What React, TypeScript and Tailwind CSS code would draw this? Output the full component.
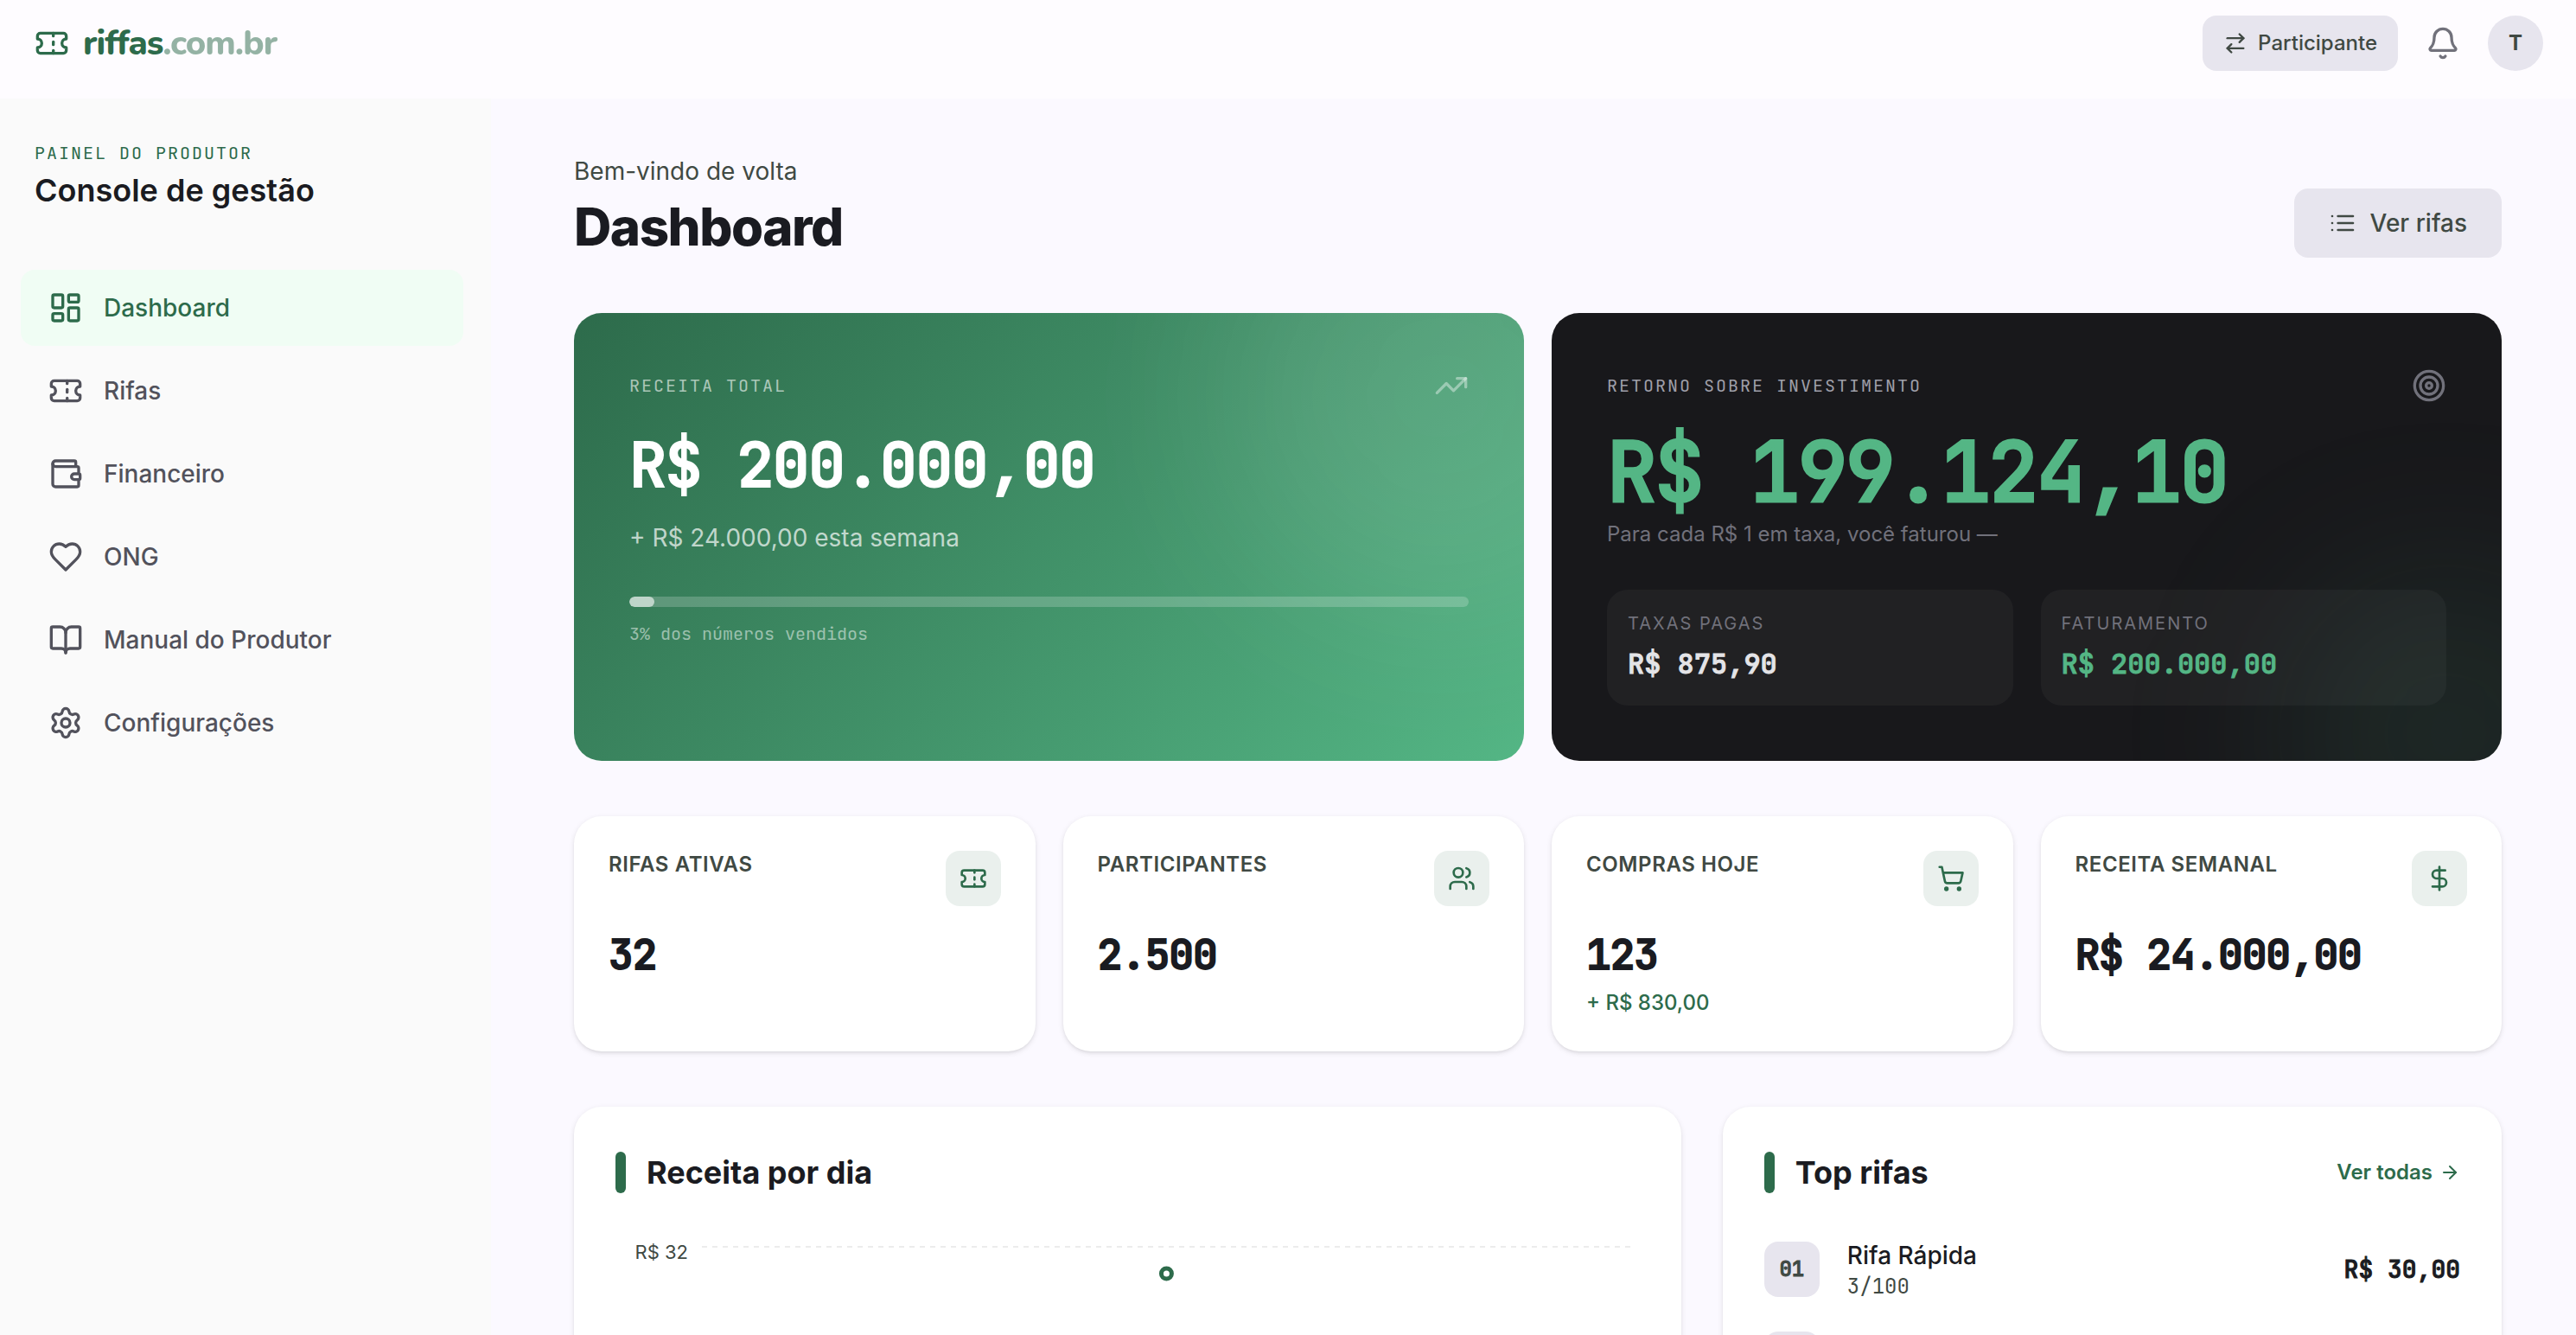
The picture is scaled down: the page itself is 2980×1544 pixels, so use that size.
import { ReactNode } from "react";
import {
  ArrowRight,
  ArrowRightLeft,
  Bell,
  BookOpen,
  DollarSign,
  LayoutDashboard,
  LucideIcon,
  Settings,
  ShoppingCart,
  Target,
  Ticket,
  TrendingUp,
  Users,
  Wallet,
} from "lucide-react";
import clsx from "clsx";

type IconProps = { className?: string };

const MONO = "font-['JetBrains_Mono','Liberation_Mono',monospace]";

function HeartIcon({ className }: IconProps) {
  return (
    <svg
      viewBox="0 0 24 24"
      fill="none"
      stroke="currentColor"
      strokeWidth={2}
      strokeLinecap="round"
      strokeLinejoin="round"
      className={className}
      aria-hidden="true"
    >
      <path d="M19 14c1.49-1.46 3-3.21 3-5.5A5.5 5.5 0 0 0 16.5 3c-1.76 0-3 .5-4.5 2-1.5-1.5-2.74-2-4.5-2A5.5 5.5 0 0 0 2 8.5c0 2.3 1.5 4.05 3 5.5l7 7Z" />
    </svg>
  );
}

function ListIcon({ className }: IconProps) {
  return (
    <svg
      viewBox="0 0 24 24"
      fill="none"
      stroke="currentColor"
      strokeWidth={2}
      strokeLinecap="round"
      strokeLinejoin="round"
      className={className}
      aria-hidden="true"
    >
      <path d="M3 6h.01M3 12h.01M3 18h.01M8 6h13M8 12h13M8 18h13" />
    </svg>
  );
}

const navItems: { label: string; icon: LucideIcon | typeof HeartIcon; active?: boolean }[] = [
  { label: "Dashboard", icon: LayoutDashboard, active: true },
  { label: "Rifas", icon: Ticket },
  { label: "Financeiro", icon: Wallet },
  { label: "ONG", icon: HeartIcon },
  { label: "Manual do Produtor", icon: BookOpen },
  { label: "Configurações", icon: Settings },
];

const stats: { label: string; value: string; note?: string; icon: LucideIcon }[] = [
  { label: "Rifas ativas", value: "32", icon: Ticket },
  { label: "Participantes", value: "2.500", icon: Users },
  { label: "Compras hoje", value: "123", note: "+ R$ 830,00", icon: ShoppingCart },
  { label: "Receita semanal", value: "R$ 24.000,00", icon: DollarSign },
];

const topRaffles: { name: string; sold: string; total: string }[] = [
  { name: "Rifa Rápida", sold: "3/100", total: "R$ 30,00" },
  { name: "", sold: "", total: "" },
];

function Header() {
  return (
    <header className="flex shrink-0 items-center justify-between bg-[#fefcff] pt-[18px] pr-[38px] pb-8 pl-10">
      <a href="#" className="flex items-center gap-4 text-[#2d6b4b]">
        <Ticket className="size-10" />
        <span className="font-['Nunito','Lato',sans-serif] text-[40px] leading-[64px] font-extrabold tracking-tight">
          riffas<span className="opacity-50">.com.br</span>
        </span>
      </a>
      <div className="flex items-center gap-5">
        <button
          type="button"
          className="flex h-16 items-center gap-3 rounded-2xl bg-[#e7e5ee] px-6 text-[24px] font-medium text-[#404943]"
        >
          <ArrowRightLeft className="size-7" />
          Participante
        </button>
        <button type="button" aria-label="Notificações" className="flex size-16 items-center justify-center text-zinc-500">
          <Bell className="size-10" />
        </button>
        <button type="button" className="size-16 rounded-full bg-[#e7e5ee] text-[24px] font-bold text-[#404943]">
          T
        </button>
      </div>
    </header>
  );
}

function Sidebar() {
  return (
    <aside className="w-[568px] shrink-0 bg-[#fafafa] pt-12 pr-8 pl-6">
      <div className="px-4">
        <p className={clsx(MONO, "text-[20px] leading-[30px] tracking-widest text-[#2d6b4b] uppercase")}>
          Painel do Produtor
        </p>
        <p className="mt-1 text-[36px] leading-[48px] font-semibold text-[#1a1b21]">Console de gestão</p>
      </div>
      <nav className="mt-17 flex flex-col gap-2">
        {navItems.map(({ label, icon: Icon, active }) => (
          <a
            key={label}
            href="#"
            className={clsx(
              "flex h-22 items-center gap-6 rounded-2xl px-8 text-[28px] font-medium",
              active ? "bg-green-50 text-[#2d6b4b]" : "text-zinc-600",
            )}
          >
            <Icon className="size-10" />
            {label}
          </a>
        ))}
      </nav>
    </aside>
  );
}

function RevenueCard() {
  const soldPercent = 3;
  return (
    <section className="relative overflow-hidden rounded-4xl bg-linear-135 from-[#2d6b4b] to-[#54b685] p-16">
      <div className="absolute -top-40 -right-40 size-128 rounded-full bg-white/10 blur-[96px]" />
      <div className="relative">
        <div className="flex items-center justify-between">
          <h2 className={clsx(MONO, "text-[20px] leading-10 tracking-widest text-white/60 uppercase")}>Receita total</h2>
          <TrendingUp className="size-10 text-white/40" />
        </div>
        <p
          className={clsx(
            MONO,
            "mt-8 text-[72px] leading-[80px] font-medium tracking-tight text-white [-webkit-text-stroke:2px]",
          )}
        >
          R$ 200.000,00
        </p>
        <p className="mt-6 text-[28px] leading-10 text-white/70">+ R$ 24.000,00 esta semana</p>
        <div className="mt-12 h-3 overflow-hidden rounded-full bg-white/20">
          <div className="h-full rounded-full bg-white/60" style={{ width: `${soldPercent}%` }} />
        </div>
        <p className={clsx(MONO, "mt-4 text-[20px] leading-[30px] text-white/50")}>{soldPercent}% dos números vendidos</p>
      </div>
    </section>
  );
}

function RoiBox({ label, value, highlight }: { label: string; value: string; highlight?: boolean }) {
  return (
    <div className="rounded-3xl bg-white/4 p-6">
      <p className="text-[20px] leading-[30px] tracking-widest text-zinc-500 uppercase">{label}</p>
      <p
        className={clsx(
          MONO,
          "mt-2 text-[32px] leading-[48px] font-medium [-webkit-text-stroke:1px]",
          highlight ? "text-[#54b685]" : "text-zinc-200",
        )}
      >
        {value}
      </p>
    </div>
  );
}

function RoiCard() {
  return (
    <section className="relative overflow-hidden rounded-4xl bg-zinc-900 p-16">
      <div className="absolute -right-32 -bottom-40 size-96 rounded-full bg-[#54b685]/10 blur-[96px]" />
      <div className="relative">
        <div className="flex items-center justify-between">
          <h2 className={clsx(MONO, "text-[20px] leading-10 tracking-widest text-zinc-400 uppercase")}>
            Retorno sobre investimento
          </h2>
          <Target className="size-10 text-zinc-500" />
        </div>
        <p
          className={clsx(
            MONO,
            "mt-8 text-[96px] leading-[96px] font-medium tracking-tight text-[#54b685] [-webkit-text-stroke:3px]",
          )}
        >
          R$ 199.124,10
        </p>
        <p className="mt-2 text-[24px] leading-8 text-zinc-500">Para cada R$ 1 em taxa, você faturou —</p>
        <div className="mt-12 grid grid-cols-2 gap-8">
          <RoiBox label="Taxas pagas" value="R$ 875,90" />
          <RoiBox label="Faturamento" value="R$ 200.000,00" highlight />
        </div>
      </div>
    </section>
  );
}

function Card({ children, className }: { children: ReactNode; className?: string }) {
  return (
    <section
      className={clsx(
        "rounded-4xl bg-white shadow-[0_2px_6px_rgba(0,0,0,0.1),0_2px_4px_-2px_rgba(0,0,0,0.1)]",
        className,
      )}
    >
      {children}
    </section>
  );
}

function StatCard({ label, value, note, icon: Icon }: (typeof stats)[number]) {
  return (
    <Card className="p-10">
      <div className="flex items-start justify-between">
        <h2 className="text-[24px] leading-8 font-semibold tracking-wide text-[#404943] uppercase">{label}</h2>
        <span className="flex size-16 items-center justify-center rounded-2xl bg-[#2d6b4b]/10 text-[#2d6b4b]">
          <Icon className="size-8" />
        </span>
      </div>
      <p
        className={clsx(
          MONO,
          "mt-6 text-[48px] leading-[64px] font-medium tracking-tight text-[#1a1b21] [-webkit-text-stroke:2px]",
        )}
      >
        {value}
      </p>
      {note ? <p className="mt-2 text-[24px] leading-8 font-medium text-[#2d6b4b]">{note}</p> : null}
    </Card>
  );
}

function SectionTitle({ title, right }: { title: string; right?: ReactNode }) {
  return (
    <div className="flex items-center justify-between">
      <div className="flex items-center gap-6">
        <span className="h-12 w-3 rounded-full bg-[#2d6b4b]" />
        <h2 className="text-[36px] leading-[56px] font-bold text-[#1a1b21]">{title}</h2>
      </div>
      {right}
    </div>
  );
}

function RevenueChart() {
  return (
    <div className="mt-12 flex gap-4 pr-[10px]">
      <span className="w-[84px] shrink-0 text-right text-[22px] leading-8 text-[#404943]">R$ 32</span>
      <svg className="h-100 w-full min-w-0 flex-1" role="img" aria-label="Receita por dia">
        <line x1="0" x2="100%" y1="10" y2="10" stroke="#ececec" strokeWidth="2" strokeDasharray="6 6" />
        <circle cx="50%" cy="41" r="6" fill="#fff" stroke="#2d6b4b" strokeWidth="5" />
      </svg>
    </div>
  );
}

function TopRaffles() {
  return (
    <Card className="col-span-5 p-12">
      <SectionTitle
        title="Top rifas"
        right={
          <a href="#" className="flex items-center gap-2 text-[24px] font-semibold text-[#2d6b4b]">
            Ver todas
            <ArrowRight className="size-6" />
          </a>
        }
      />
      <ol className="mt-12 flex flex-col gap-8">
        {topRaffles.map((raffle, i) => (
          <li key={i} className="flex h-18 items-center gap-8">
            <span
              className={clsx(
                MONO,
                "flex size-16 shrink-0 items-center justify-center rounded-2xl bg-[#e7e5ee] text-[24px] font-medium text-[#404943] [-webkit-text-stroke:1px]",
              )}
            >
              {String(i + 1).padStart(2, "0")}
            </span>
            <div className="min-w-0 flex-1">
              <p className="truncate text-[28px] leading-10 font-medium text-[#1a1b21]">{raffle.name}</p>
              <p className={clsx(MONO, "text-[24px] leading-8 text-[#404943]")}>{raffle.sold}</p>
            </div>
            <span className={clsx(MONO, "text-[28px] font-medium text-[#1a1b21] [-webkit-text-stroke:1px]")}>
              {raffle.total}
            </span>
          </li>
        ))}
      </ol>
    </Card>
  );
}

export default function App() {
  return (
    <div className="flex h-screen flex-col overflow-hidden bg-[#fbf9ff] font-['Inter',sans-serif]">
      <Header />
      <div className="flex min-h-0 flex-1">
        <Sidebar />
        <main className="min-w-0 flex-1 pt-16 pr-[86px] pl-24">
          <div className="flex items-end justify-between">
            <div>
              <p className="text-[28px] leading-10 text-[#404943]">Bem-vindo de volta</p>
              <h1 className="mt-2 text-[60px] leading-[72px] font-extrabold tracking-tight text-[#1a1b21]">Dashboard</h1>
            </div>
            <button
              type="button"
              className="flex h-20 items-center gap-4 rounded-2xl bg-[#e7e5ee] px-10 text-[28px] font-medium text-[#404943]"
            >
              <ListIcon className="size-8" />
              Ver rifas
            </button>
          </div>

          <div className="mt-16 grid grid-cols-2 gap-8">
            <RevenueCard />
            <RoiCard />
          </div>

          <div className="mt-16 grid grid-cols-4 gap-8">
            {stats.map((stat) => (
              <StatCard key={stat.label} {...stat} />
            ))}
          </div>

          <div className="mt-16 grid grid-cols-12 gap-12">
            <Card className="col-span-7 p-12">
              <SectionTitle title="Receita por dia" />
              <RevenueChart />
            </Card>
            <TopRaffles />
          </div>
        </main>
      </div>
    </div>
  );
}
